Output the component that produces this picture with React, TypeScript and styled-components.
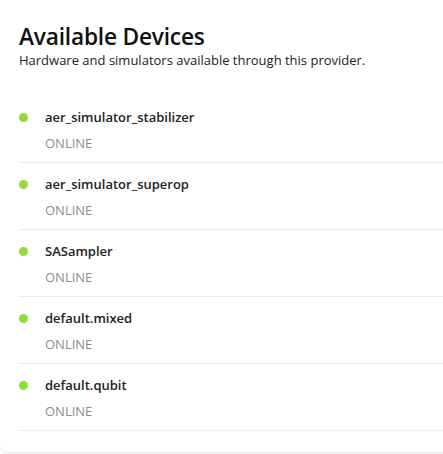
import styled, { createGlobalStyle } from "styled-components";

const GlobalStyle = createGlobalStyle`
	html, body {
		margin: 0;
		padding: 0;
		background: #ffffff;
	}
	body {
		font-family: "Open Sans", "Noto Sans", sans-serif;
	}
`;

interface Device {
	name: string;
	status: string;
}

const devices: Device[] = [
	{ name: "aer_simulator_stabilizer", status: "ONLINE" },
	{ name: "aer_simulator_superop", status: "ONLINE" },
	{ name: "SASampler", status: "ONLINE" },
	{ name: "default.mixed", status: "ONLINE" },
	{ name: "default.qubit", status: "ONLINE" },
];

const Card = styled.section`
	width: 460px;
	box-sizing: border-box;
	background: #ffffff;
	border-radius: 0 0 8px 8px;
	box-shadow: 0 1px 2px rgba(0, 0, 0, 0.12);
	padding: 23px 0 21px 19px;
	margin-bottom: 2px;
`;

const Title = styled.h2`
	margin: 0;
	font-size: 22.7px;
	line-height: 28px;
	font-weight: 600;
	color: #111111;
	letter-spacing: -0.2px;
`;

const Subtitle = styled.p`
	margin: 0;
	font-size: 13px;
	line-height: 18px;
	color: #222222;
`;

const List = styled.ul`
	list-style: none;
	margin: 27px 0 0;
	padding: 0;
`;

const Row = styled.li`
	display: grid;
	grid-template-columns: 9px 1fr;
	column-gap: 17px;
	row-gap: 8px;
	align-items: center;
	padding: 12px 0 10px;
	border-bottom: 1px solid #ebebeb;
`;

const Dot = styled.span<{ online: boolean }>`
	width: 9px;
	height: 9px;
	border-radius: 50%;
	background: ${({ online }) => (online ? "#93da3f" : "#c8c8c8")};
`;

const Name = styled.span`
	font-size: 13px;
	line-height: 18px;
	font-weight: 600;
	color: #222222;
`;

const Status = styled.span`
	grid-column: 2;
	font-size: 13px;
	line-height: 18px;
	color: #8c8c8c;
`;

const App = () => {
	return (
		<>
			<GlobalStyle />
			<Card>
				<Title>Available Devices</Title>
				<Subtitle>Hardware and simulators available through this provider.</Subtitle>
				<List>
					{devices.map((device) => (
						<Row key={device.name}>
							<Dot online={device.status === "ONLINE"} />
							<Name>{device.name}</Name>
							<Status>{device.status}</Status>
						</Row>
					))}
				</List>
			</Card>
		</>
	);
};

export default App;
